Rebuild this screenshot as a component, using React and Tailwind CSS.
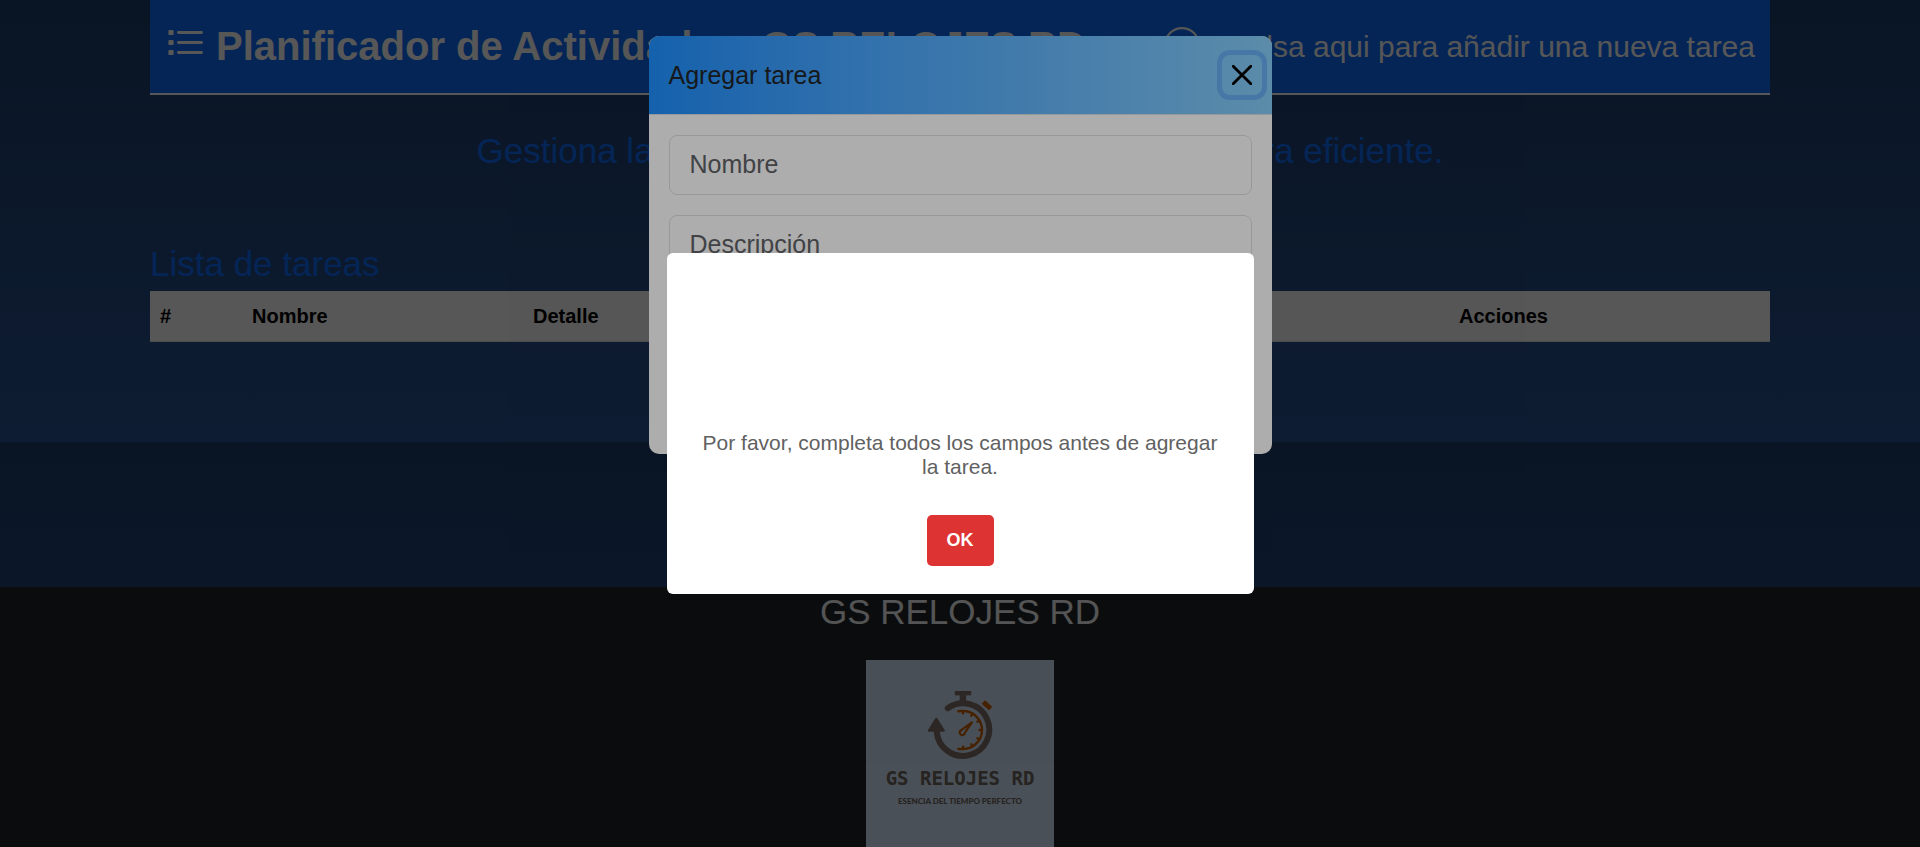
import { BsPlusCircle } from "react-icons/bs";

const columns = [
  { label: "#", width: "w-[92px]" },
  { label: "Nombre", width: "w-[281px]" },
  { label: "Detalle", width: "w-[463px]" },
  { label: "Fecha", width: "w-[463px]" },
  { label: "Acciones", width: "" },
];

function ListIcon() {
  return (
    <svg viewBox="0 0 40 30" className="mb-[5px] h-[30px] w-10 shrink-0" fill="currentColor" aria-hidden="true">
      {[4.5, 14.5, 24.5].map((y) => (
        <g key={y}>
          <rect x="3.4" y={y - 2.6} width="5.2" height="5.2" rx="1.2" />
          <rect x="12" y={y - 1.4} width="26" height="2.8" rx="1.4" />
        </g>
      ))}
    </svg>
  );
}

function Header() {
  return (
    <header className="flex h-[95px] items-center justify-between border-b-2 border-white bg-[#0d6efd] px-[15px] text-white">
      <h1 className="flex items-center gap-[11px] pb-0.5 text-[40px] leading-12 font-bold whitespace-nowrap">
        <ListIcon />
        <span>Planificador de Actividades: GS RELOJES RD</span>
      </h1>
      <button type="button" className="flex items-center gap-[30px] text-[30px] leading-9 whitespace-nowrap">
        <BsPlusCircle className="mb-[3px] size-9" aria-hidden="true" />
        Pulsa aqui para añadir una nueva tarea
      </button>
    </header>
  );
}

function TaskTable() {
  return (
    <section className="pt-[25px]">
      <h2 className="text-[35px] leading-[42px] text-[#0d6efd]">Lista de tareas</h2>
      <table className="mt-[6px] w-full table-fixed border-b border-[#dee2e6] bg-white text-left text-[20px] leading-[30px] text-black">
        <thead>
          <tr>
            {columns.map((c) => (
              <th key={c.label} scope="col" className={`p-[10px] font-bold ${c.width}`}>
                {c.label}
              </th>
            ))}
          </tr>
        </thead>
      </table>
    </section>
  );
}

function Logo() {
  return (
    <svg viewBox="0 0 188 188" className="mt-[27px] size-[188px] shrink-0" role="img" aria-label="GS Relojes RD">
      <rect width="188" height="188" fill="#d9ebff" />
      <g fill="#84756c" stroke="#84756c" strokeLinejoin="round">
        <path d="M81.7 48.2A26.3 26.3 0 1 1 70.7 71" fill="none" strokeWidth="6" strokeLinecap="round" />
        <path d="M70.3 59L63 70.6H77.7Z" strokeWidth="2.4" />
        <rect x="89.2" y="31.5" width="15.6" height="3.4" strokeWidth="1" />
        <rect x="93.7" y="35" width="6.4" height="8" stroke="none" />
      </g>
      <rect x="116" y="42.8" width="10" height="5" rx="1" fill="#d06400" transform="rotate(43 121 45.3)" />
      <g fill="none" stroke="#d06400" strokeWidth="2.4" strokeLinecap="round">
        <path d="M92.3 51.2Q94.6 50.8 97 51A19 19 0 0 1 97 89Q94.6 89.3 92.3 89" />
        {[-90, -60, -30, 0, 30, 60, 90].map((angle) => (
          <path key={angle} d="M116 70H113.6" transform={`rotate(${angle} 97 70)`} />
        ))}
        <path d="M106 62.4L94.9 70.3A2.6 2.6 0 1 0 98.9 72.6Z" strokeWidth="2.2" strokeLinejoin="round" />
      </g>
      <text x="94" y="125" textAnchor="middle" fill="#6f675e" className="font-['DejaVu_Sans_Mono',monospace] text-[19px] font-bold">
        GS RELOJES RD
      </text>
      <text x="94" y="144" textAnchor="middle" fill="#6f675e" className="font-['Lato',sans-serif] text-[8px] font-black">
        ESENCIA DEL TIEMPO PERFECTO
      </text>
    </svg>
  );
}

function Field({ id, label }) {
  return (
    <div className="relative">
      <input
        id={id}
        type="text"
        placeholder=" "
        className="block h-[60px] w-full rounded-[8px] border border-[#dee2e6] bg-white px-5 text-[25px] text-[#212529]"
      />
      <label htmlFor={id} className="pointer-events-none absolute inset-y-0 left-[21px] flex items-center text-[25px] text-[#5f6266]">
        {label}
      </label>
    </div>
  );
}

function TaskModal() {
  return (
    <div className="fixed inset-0 flex items-start justify-center bg-black/50 pt-9">
      <div role="dialog" aria-label="Agregar tarea" className="w-[623px] overflow-hidden rounded-[10px] bg-white">
        <div className="flex h-[79px] items-center justify-between border-b border-[#dee2e6] bg-linear-to-r from-[#1e90ff] to-[#87cefa] px-5">
          <h5 className="text-[25px] leading-[38px] text-[#212529]">Agregar tarea</h5>
          <button type="button" aria-label="Cerrar" className="-mr-[10px] grid size-10 place-items-center rounded-[8px] text-black ring-5 ring-[#68b0f5]">
            <svg viewBox="0 0 20 20" className="size-5" aria-hidden="true">
              <path d="M1.2 1.2L18.8 18.8M18.8 1.2L1.2 18.8" stroke="currentColor" strokeWidth="2.8" strokeLinecap="round" />
            </svg>
          </button>
        </div>
        <form className="flex flex-col gap-5 p-5">
          <Field id="nombre" label="Nombre" />
          <Field id="descripcion" label="Descripción" />
          <Field id="fecha" label="Fecha" />
          <button type="submit" className="h-[59px] rounded-[8px] bg-[#0d6efd] text-[20px] text-white">
            Agregar
          </button>
        </form>
      </div>
    </div>
  );
}

function Alert() {
  return (
    <div className="fixed inset-0 flex items-center justify-center bg-black/32">
      <div role="alertdialog" aria-describedby="alert-text" className="flex h-[341px] w-[587px] flex-col items-center justify-end rounded-[6px] bg-white px-8 pb-7">
        <p id="alert-text" className="text-center text-[21px] leading-6 text-[#616161]">
          Por favor, completa todos los campos antes de agregar la tarea.
        </p>
        <button type="button" className="mt-9 h-[51px] rounded-[5px] bg-[#de3333] px-5 text-[18px] font-semibold text-white">
          OK
        </button>
      </div>
    </div>
  );
}

export default function App() {
  return (
    <div className="h-screen overflow-hidden bg-[#212529] font-['Liberation_Sans',Arial,sans-serif]">
      <div className="h-[442px] bg-linear-to-b from-[#1d3e69] to-[#2a5496]">
        <div className="mx-auto w-full max-w-[1620px]">
          <Header />
          <p className="border-b border-[#1d4a85] pt-[35px] pb-[45px] text-center text-[35px] leading-[42px] text-[#0d6efd]">
            Gestiona las tareas de GS RELOJES RD de manera eficiente.
          </p>
          <TaskTable />
        </div>
      </div>
      <div className="h-[145px] bg-linear-to-b from-[#1d3e69] to-[#21457a]" />
      <footer className="flex flex-col items-center bg-[#212529] pt-1 text-[#f8f9fa]">
        <h3 className="text-[35px] leading-[42px]">GS RELOJES RD</h3>
        <Logo />
      </footer>
      <TaskModal />
      <Alert />
    </div>
  );
}
